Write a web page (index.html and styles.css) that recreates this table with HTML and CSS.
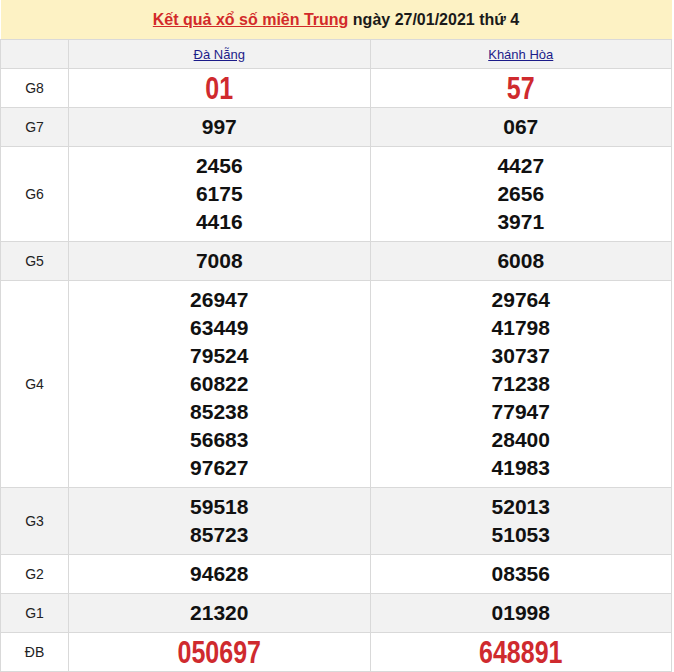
FILE: index.html
```html
<!DOCTYPE html>
<html lang="vi">
<head>
<meta charset="utf-8">
<title>Kết quả xổ số miền Trung</title>
<link rel="stylesheet" href="styles.css">
</head>
<body>
<table class="kq">
  <colgroup>
    <col class="c-label">
    <col class="c-prov">
    <col class="c-prov">
  </colgroup>
  <thead>
    <tr>
      <th colspan="3" class="title"><a href="#" class="title-link">Kết quả xổ số miền Trung</a> ngày 27/01/2021 thứ 4</th>
    </tr>
    <tr class="alt">
      <th></th>
      <th class="prov"><a href="#">Đà Nẵng</a></th>
      <th class="prov"><a href="#">Khánh Hòa</a></th>
    </tr>
  </thead>
  <tbody>
    <tr>
      <td class="lbl">G8</td>
      <td class="num"><span class="big">01</span></td>
      <td class="num"><span class="big">57</span></td>
    </tr>
    <tr class="alt">
      <td class="lbl">G7</td>
      <td class="num">997</td>
      <td class="num">067</td>
    </tr>
    <tr>
      <td class="lbl">G6</td>
      <td class="num"><div>2456</div><div>6175</div><div>4416</div></td>
      <td class="num"><div>4427</div><div>2656</div><div>3971</div></td>
    </tr>
    <tr class="alt">
      <td class="lbl">G5</td>
      <td class="num">7008</td>
      <td class="num">6008</td>
    </tr>
    <tr>
      <td class="lbl">G4</td>
      <td class="num"><div>26947</div><div>63449</div><div>79524</div><div>60822</div><div>85238</div><div>56683</div><div>97627</div></td>
      <td class="num"><div>29764</div><div>41798</div><div>30737</div><div>71238</div><div>77947</div><div>28400</div><div>41983</div></td>
    </tr>
    <tr class="alt">
      <td class="lbl">G3</td>
      <td class="num"><div>59518</div><div>85723</div></td>
      <td class="num"><div>52013</div><div>51053</div></td>
    </tr>
    <tr>
      <td class="lbl">G2</td>
      <td class="num">94628</td>
      <td class="num">08356</td>
    </tr>
    <tr class="alt">
      <td class="lbl">G1</td>
      <td class="num">21320</td>
      <td class="num">01998</td>
    </tr>
    <tr>
      <td class="lbl">ĐB</td>
      <td class="num"><span class="big">050697</span></td>
      <td class="num"><span class="big">648891</span></td>
    </tr>
  </tbody>
</table>
</body>
</html>
```
FILE: styles.css
```css
html, body {
  margin: 0;
  padding: 0;
  background: #ffffff;
}
body {
  font-family: "Liberation Sans", Arial, sans-serif;
  color: #111;
}
.kq {
  width: 672px;
  border-collapse: collapse;
  table-layout: fixed;
}
.c-label { width: 68px; }
.kq th, .kq td {
  border: 1px solid #d9d9d9;
  text-align: center;
  vertical-align: middle;
  padding: 0;
}
.kq .title {
  background: #fdf2c4;
  height: 39px;
  font-size: 16px;
  font-weight: bold;
  color: #1a1a1a;
  border-top: 0;
  border-left: 0;
  border-right: 0;
}
.title-link {
  color: #d22a2a;
  text-decoration: underline;
}
.alt {
  background: #f2f2f2;
}
.kq .prov {
  height: 28px;
  font-size: 13px;
  font-weight: normal;
}
.prov a {
  color: #1c1c8a;
  text-decoration: underline;
}
.kq .lbl {
  font-size: 14px;
  color: #222;
}
.kq .num {
  font-size: 21px;
  font-weight: bold;
  line-height: 28px;
  padding: 5px 0;
  color: #111;
}
.big {
  display: inline-block;
  vertical-align: top;
  font-size: 25px;
  line-height: 28px;
  color: #cf2a2e;
  transform: scaleY(1.25);
}
```
